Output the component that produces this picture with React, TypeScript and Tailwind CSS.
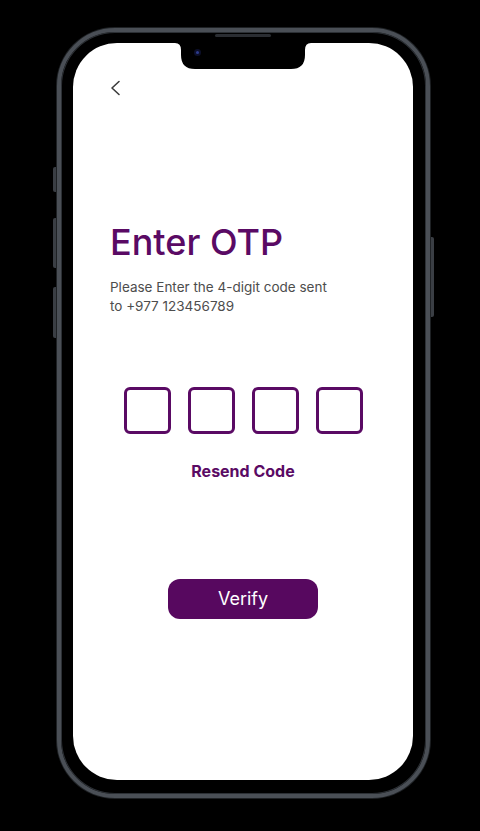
import React from "react";

export default function App() {
  return (
    <div className="w-[480px] h-[831px] bg-black overflow-hidden pt-[28px] pl-[57px]" style={{ fontFamily: "Inter, 'Noto Sans', sans-serif" }}>
      <div className="relative box-border w-[373px] h-[770px] rounded-[58px] border-[4px] border-[#4a4f56] shadow-[0_0_0_1px_#1e2124,inset_0_0_0_1px_#2c3035] bg-black pl-[12px] pt-[11px]">
        {/* side buttons */}
        <div className="absolute left-[-8px] top-[135px] w-[3px] h-[25px] rounded-l-[2px] bg-[#3a3e44]" />
        <div className="absolute left-[-8px] top-[186px] w-[3px] h-[50px] rounded-l-[2px] bg-[#3a3e44]" />
        <div className="absolute left-[-8px] top-[255px] w-[3px] h-[51px] rounded-l-[2px] bg-[#3a3e44]" />
        <div className="absolute right-[-8px] top-[205px] w-[3px] h-[80px] rounded-r-[2px] bg-[#3a3e44]" />
        {/* speaker */}
        <div className="absolute left-[154px] top-[2px] w-[56px] h-[3px] rounded-full bg-[#2a2d32]" />

        <div className="relative w-[340px] h-[737px] rounded-[44px] bg-white overflow-hidden">
          {/* notch */}
          <div className="absolute left-[102px] top-0 w-[136px] h-[26px]">
            <svg width="136" height="26" viewBox="0 0 136 26" className="block">
              <path d="M0 0 Q6 0 6 7 L6 12 Q6 26 20 26 L116 26 Q130 26 130 12 L130 7 Q130 0 136 0 Z" fill="#000" />
            </svg>
            <div className="absolute left-[19px] top-[6px] w-[7px] h-[7px] rounded-full bg-[#0c0f2a] flex items-center justify-center">
              <div className="w-[3px] h-[3px] rounded-full bg-[#2d3c8c]" />
            </div>
          </div>

          <div className="flex flex-col pt-[37px]">
            <div className="pl-[37px]">
              <svg width="12" height="16" viewBox="0 0 12 16" className="block" fill="none">
                <path d="M9 1.5 L2 8 L9 14.5" stroke="#3c3c3c" strokeWidth="1.6" strokeLinecap="round" strokeLinejoin="round" />
              </svg>
            </div>
            <h1 className="mt-[126px] pl-[37px] text-[36px] leading-[40px] font-medium text-[#5a0a64]">Enter OTP</h1>
            <p className="mt-[16px] pl-[37px] text-[13.5px] leading-[19px] text-[#4d4d4d]">
              Please Enter the 4-digit code sent
              <br />
              to +977 123456789
            </p>
            <div className="mt-[71px] flex justify-center gap-[17px]">
              {[0, 1, 2, 3].map((i) => (
                <div key={i} className="w-[47px] h-[47px] rounded-[6px] border-[3px] border-[#5a0a64]" />
              ))}
            </div>
            <div className="mt-[27px] text-center text-[16px] leading-[20px] font-bold text-[#5a0a64]">Resend Code</div>
            <div className="mt-[98px] flex justify-center">
              <button className="w-[150px] h-[40px] rounded-[12px] bg-[#57085f] text-white text-[18px] leading-[40px] font-normal">
                Verify
              </button>
            </div>
          </div>
        </div>
      </div>
    </div>
  );
}
